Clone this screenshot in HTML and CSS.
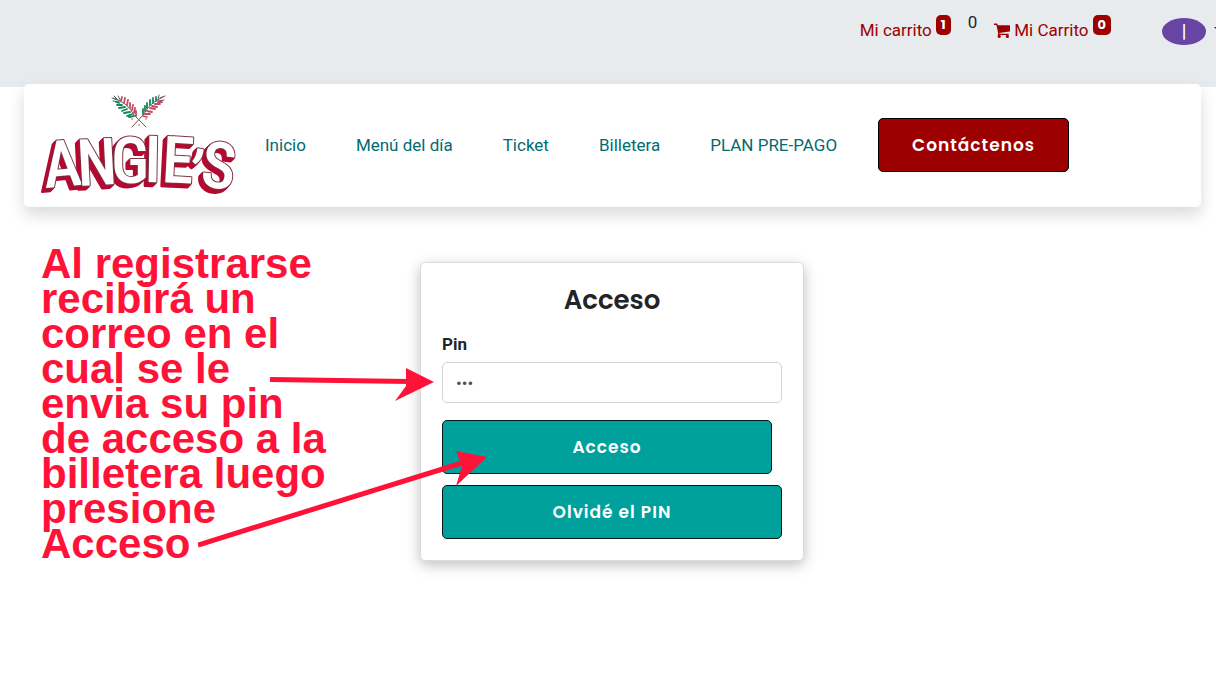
FILE: index.html
```html
<!DOCTYPE html>
<html lang="es">
<head>
<meta charset="utf-8">
<meta name="viewport" content="width=device-width, initial-scale=1">
<title>Angie's - Acceso</title>
<link rel="stylesheet" href="styles.css">
</head>
<body>
<header class="topbar">
  <a class="cart-link" href="#">Mi carrito <span class="badge">1</span></a>
  <span class="counter">0</span>
  <a class="cart-link" href="#">
    <svg class="cart-icon" viewBox="0 0 16 15" aria-hidden="true">
      <path d="M0 .6h2.6q.8 0 1 .8l.2.9H15.400q.6 0 .6.6v5q0 .6-.6.7L5.200 9.900l.2.9h8.800q.6 0 .6.6t-.6.6H4.300q-.7 0-.6-.7l.5-1L2.400 1.900H0z"/>
      <circle cx="5.200" cy="13.400" r="1.600"/><circle cx="13.400" cy="13.400" r="1.600"/>
    </svg>
    Mi Carrito <span class="badge">0</span></a>
  <button class="account" type="button" aria-label="Cuenta"><span class="avatar">|</span><span class="caret"></span></button>
</header>

<nav class="navbar">
  <a class="brand" href="#" aria-label="Angie's">
    <svg class="logo" viewBox="0 0 200 110" role="img" aria-label="Angie's">
      <g transform="translate(2 1)">
        <g fill="none" stroke-linecap="round">
          <path d="M74 7Q88 12 94 24L106 36" stroke="#7b5358" stroke-width="1"/>
          <path d="M72 7l5 2M74 5l4 4M78 5l3 5M73 10l7 1" stroke="#52635b" stroke-width="1"/>
          <path d="M79 12l-3-1M82 14l-5 0M85 16l-6 1M87 18l-5 2M90 21l-6 1M92 23l-5 2M94 25l-5 1" stroke="#15875d" stroke-width="1.800"/>
          <path d="M81 10l1-4M84 12l1-5M87 14l1-5M90 17l0-5M92 19l1-5M94 22l1-5M96 25l0-5" stroke="#c44b63" stroke-width="1.800"/>
        </g>
        <g fill="none" stroke-linecap="round">
          <path d="M123 6Q109 12 104 23L92 36" stroke="#7b5358" stroke-width="1"/>
          <path d="M125 5l-5 2M124 9l-6 1M119 4l-1 5" stroke="#704d55" stroke-width="1"/>
          <path d="M116 10l0-4M113 12l0-5M110 14l0-5M107 17l0-5M105 20l0-5M103 23l0-5" stroke="#15875d" stroke-width="1.800"/>
          <path d="M118 11l4 0M115 13l5 0M112 15l5 1M110 17l5 1M107 20l5 1M105 23l5 0M103 25l4 1" stroke="#c44b63" stroke-width="1.800"/>
        </g>
        <g fill="#d79aa6"><circle cx="92" cy="28" r="1"/><circle cx="106" cy="28" r="1"/><circle cx="99" cy="34" r="1"/></g>
      </g>
      <text class="lettering" x="7 40 73 106 123 145 161" y="98 96 93 92 92 105 96" rotate="-5 -3 0 1 3 12 7">ANGIE’S</text>
    </svg>
  </a>
  <a class="nav-link" href="#">Inicio</a>
  <a class="nav-link" href="#">Menú del día</a>
  <a class="nav-link" href="#">Ticket</a>
  <a class="nav-link" href="#">Billetera</a>
  <a class="nav-link" href="#">PLAN PRE-PAGO</a>
  <button class="btn btn-contact" type="button">Contáctenos</button>
</nav>

<main class="content">
  <p class="note">Al registrarse recibirá un correo en el cual se le envia su pin de acceso a la billetera luego presione Acceso</p>
  <form class="card">
    <h1 class="card-title">Acceso</h1>
    <label class="label" for="pin">Pin</label>
    <input class="pin" id="pin" type="password" value="123">
    <button class="btn btn-login" type="button">Acceso</button>
    <button class="btn" type="button">Olvidé el PIN</button>
  </form>
  <svg class="arrows" viewBox="0 0 290 190" aria-hidden="true">
    <path d="M72 19.500L212 21.500M0 185L264 103" fill="none" stroke="#ff1237" stroke-width="5"/>
    <path d="M208 8L236 22L197 41L208 26zM258 91L289 97L258 126L264 106z" fill="#ff1237"/>
  </svg>
</main>
</body>
</html>
```
FILE: styles.css
```css
* { box-sizing: border-box; }

body {
  min-height: 100vh;
  margin: 0;
  background: #fff;
  color: #212529;
  font: 17px/24px Roboto, sans-serif;
}

.topbar {
  display: flex;
  justify-content: flex-end;
  align-items: flex-start;
  height: 87px;
  padding-top: 10px;
  background: #e8ebee;
  overflow: hidden;
}

.cart-link {
  display: flex;
  align-items: center;
  gap: 4px;
  padding-top: 8px;
  color: #9c0000;
  text-decoration: none;
}

.badge {
  align-self: flex-start;
  margin-top: -3px;
  padding: 0 5px;
  border-radius: 5px;
  background: #9c0000;
  color: #fff;
  font: 700 13px/20px Poppins, sans-serif;
}

.counter { margin: 0 17px; }

.cart-icon {
  width: 16px;
  height: 15px;
  fill: #9c0000;
}

.account {
  display: flex;
  flex-shrink: 0;
  align-items: center;
  gap: 8px;
  margin: 8px -8px 0 51px;
  padding: 0;
  border: 0;
  background: none;
  color: #9c0000;
}

.avatar {
  width: 44px;
  height: 27px;
  border-radius: 50%;
  background: #6845a3;
  color: #fff;
  font: 700 18px/26px Roboto, sans-serif;
}

.caret {
  border: 5px solid transparent;
  border-top-color: #9c0000;
  border-bottom: 0;
  margin-top: -4px;
}

.navbar {
  position: relative;
  display: flex;
  align-items: center;
  gap: 50px;
  margin: -3px 15px 0 24px;
  padding: 6px 14px 7px;
  border-radius: 5px;
  background: #fff;
  box-shadow: 0 8px 16px rgba(0, 0, 0, .15);
}

.brand { margin-right: -23px; }

.logo {
  display: block;
  width: 200px;
  height: 110px;
  overflow: visible;
}

.lettering {
  fill: #fff;
  stroke: #7d2f42;
  stroke-width: 2px;
  stroke-linejoin: round;
  paint-order: stroke;
  font: 500 65px "Roboto Condensed", "Liberation Sans Narrow", "Open Sans Condensed", "DejaVu Sans Condensed", sans-serif;
  filter: drop-shadow(-1px 1px 0 #b50831) drop-shadow(-1px 1px 0 #b50831) drop-shadow(-2px 2px 0 #b50831);
}

.nav-link {
  color: #016b73;
  text-decoration: none;
  white-space: nowrap;
}

.btn {
  width: 100%;
  height: 54px;
  border: 1px solid #071b1b;
  border-radius: 5px;
  background: #00a19c;
  color: #fff;
  font: 600 17px/24px Poppins, Inter, sans-serif;
  letter-spacing: 1px;
}

.btn-contact {
  width: 191px;
  margin-left: -9px;
  border-color: #000;
  background: #9c0000;
}

.content {
  position: relative;
  display: grid;
  grid-template-columns: 1fr 384px 1fr;
  align-items: start;
  padding: 39px 0 32px 8px;
}

.note {
  max-width: 290px;
  margin: 0 0 0 33px;
  color: #ff1237;
  font: 700 42px/35px "Liberation Sans", sans-serif;
}

.card {
  display: flex;
  flex-direction: column;
  margin-top: 16px;
  padding: 21px;
  border: 1px solid #d9dbde;
  border-radius: 5px;
  background: #fff;
  box-shadow: 0 4px 14px rgba(0, 0, 0, .25);
}

.card-title {
  margin: 0 0 16px;
  font: 600 26px/32px Poppins, Inter, sans-serif;
  text-align: center;
}

.label {
  margin-bottom: 6px;
  font-weight: 700;
}

.pin {
  width: 100%;
  height: 41px;
  margin-bottom: 17px;
  padding: 0 13px;
  border: 1px solid #ced4da;
  border-radius: 5px;
  color: #495057;
  font: 17px/24px Roboto, sans-serif;
}

.btn-login {
  width: calc(100% - 10px);
  margin-bottom: 11px;
}

.arrows {
  position: absolute;
  top: 153px;
  left: 198px;
  width: 290px;
  height: 190px;
}
```
